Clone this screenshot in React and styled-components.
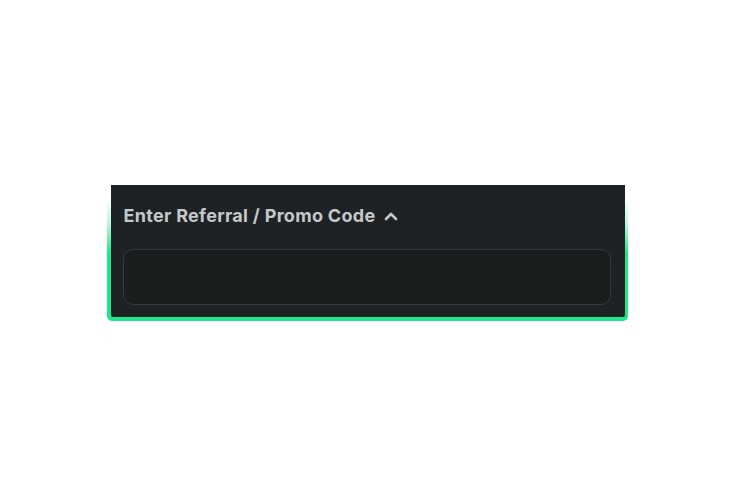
import React from "react";
import styled, { createGlobalStyle } from "styled-components";

const GlobalStyle = createGlobalStyle`
  body {
    margin: 0;
    background: #ffffff;
    font-family: Inter, "Noto Sans", sans-serif;
  }
`;

const Page = styled.div`
  display: flex;
  justify-content: center;
  padding-top: 185px;
`;

const GlowFrame = styled.div`
  width: 521px;
  padding: 0 3px 4px 4px;
  box-sizing: border-box;
  border-radius: 0 0 5px 5px;
  background: linear-gradient(
    to bottom,
    rgba(27, 232, 137, 0) 10%,
    rgba(27, 232, 137, 0.35) 30%,
    #1be889 50%,
    #1be889 100%
  );
`;

const Panel = styled.div`
  background: #1e2224;
  border-radius: 0 0 2px 2px;
  padding: 19px 13px 12px 13px;
  display: flex;
  flex-direction: column;
  gap: 21px;
`;

const Toggle = styled.button`
  display: flex;
  align-items: center;
  gap: 9px;
  padding: 0;
  border: none;
  background: none;
  cursor: pointer;
  color: #c3c9ca;
  font-family: Inter, "Noto Sans", sans-serif;
  font-weight: 700;
  font-size: 18px;
  letter-spacing: 0.3px;
  line-height: 24px;
  align-self: flex-start;
`;

const CodeInput = styled.input`
  box-sizing: border-box;
  width: 100%;
  height: 56px;
  margin: 0 0 0 -1px;
  border: 1px solid #343a3c;
  border-radius: 10px;
  background: #1a1d1e;
  color: #e5e9ea;
  font-family: Inter, "Noto Sans", sans-serif;
  font-size: 16px;
  padding: 0 14px;
  outline: none;
`;

const Chevron = () => (
  <svg width="14" height="10" viewBox="0 0 14 10" fill="none">
    <path
      d="M2 8 L7 3 L12 8"
      stroke="#c3c9ca"
      strokeWidth="2.6"
      strokeLinecap="round"
      strokeLinejoin="round"
    />
  </svg>
);

const App = () => (
  <>
    <GlobalStyle />
    <Page>
      <GlowFrame>
        <Panel>
          <Toggle type="button">
            Enter Referral / Promo Code
            <Chevron />
          </Toggle>
          <CodeInput type="text" />
        </Panel>
      </GlowFrame>
    </Page>
  </>
);

export default App;
